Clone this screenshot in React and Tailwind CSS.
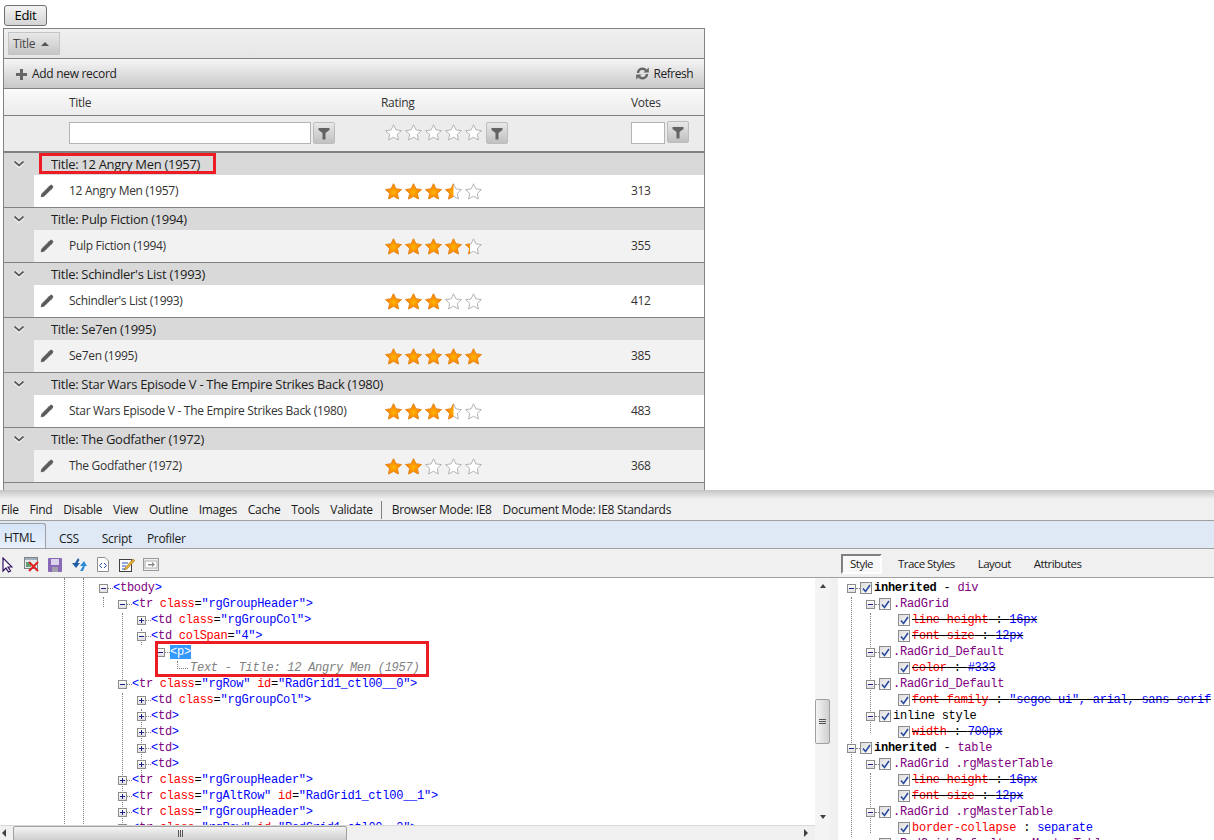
import React from "react";
import { Pencil } from "lucide-react";

const MOVIES = [
  { title: "12 Angry Men (1957)", rating: 3.5, votes: 313 },
  { title: "Pulp Fiction (1994)", rating: 4.3, votes: 355 },
  { title: "Schindler's List (1993)", rating: 3, votes: 412 },
  { title: "Se7en (1995)", rating: 5, votes: 385 },
  { title: "Star Wars Episode V - The Empire Strikes Back (1980)", rating: 3.5, votes: 483 },
  { title: "The Godfather (1972)", rating: 2, votes: 368 },
];

const MENU = ["File", "Find", "Disable", "View", "Outline", "Images", "Cache", "Tools", "Validate"];

const STAR = "M8.5 0.8 L10.9 5.9 L16.4 6.6 L12.3 10.4 L13.4 16 L8.5 13.2 L3.6 16 L4.7 10.4 L0.6 6.6 L6.1 5.9 Z";

const LEVELS = {
  0: "pl-[99px]",
  1: "pl-[118px]",
  2: "pl-[137px]",
  3: "pl-[156px]",
};

const open = (name) => [["br", "<"], ["tag", name]];
const close = [["br", ">"]];
const td = [...open("td"), ...close];
const attr = (name, value) => [["plain", " "], ["attr", name], ["plain", "="], ["val", `"${value}"`]];

const TREE = [
  { level: 0, open: true, parts: [...open("tbody"), ...close] },
  { level: 1, open: true, parts: [...open("tr"), ...attr("class", "rgGroupHeader"), ...close] },
  { level: 2, parts: [...open("td"), ...attr("class", "rgGroupCol"), ...close] },
  { level: 2, open: true, parts: [...open("td"), ...attr("colSpan", "4"), ...close] },
  { level: 3, open: true, parts: [["sel", "<p>"]] },
  { level: 3, text: "Text - Title: 12 Angry Men (1957)" },
  { level: 1, open: true, parts: [...open("tr"), ...attr("class", "rgRow"), ...attr("id", "RadGrid1_ctl00__0"), ...close] },
  { level: 2, parts: [...open("td"), ...attr("class", "rgGroupCol"), ...close] },
  { level: 2, parts: td },
  { level: 2, parts: td },
  { level: 2, parts: td },
  { level: 2, parts: td },
  { level: 1, parts: [...open("tr"), ...attr("class", "rgGroupHeader"), ...close] },
  { level: 1, parts: [...open("tr"), ...attr("class", "rgAltRow"), ...attr("id", "RadGrid1_ctl00__1"), ...close] },
  { level: 1, parts: [...open("tr"), ...attr("class", "rgGroupHeader"), ...close] },
  { level: 1, parts: [...open("tr"), ...attr("class", "rgRow"), ...attr("id", "RadGrid1_ctl00__2"), ...close] },
];

const PART_COLORS = {
  br: "text-[#0000ff]",
  tag: "text-[#800080]",
  attr: "text-[#ff0000]",
  plain: "text-black",
  val: "text-[#0000ff]",
  sel: "bg-[#3399ff] text-white",
};

const STYLES = [
  { level: 0, head: "inherited", sub: "div" },
  { level: 1, name: ".RadGrid" },
  { level: 2, prop: "line-height", value: "16px", struck: true },
  { level: 2, prop: "font-size", value: "12px", struck: true },
  { level: 1, name: ".RadGrid_Default" },
  { level: 2, prop: "color", value: "#333", struck: true },
  { level: 1, name: ".RadGrid_Default" },
  { level: 2, prop: "font-family", value: '"segoe ui", arial, sans-serif', struck: true },
  { level: 1, plain: "inline style" },
  { level: 2, prop: "width", value: "700px", struck: true },
  { level: 0, head: "inherited", sub: "table" },
  { level: 1, name: ".RadGrid .rgMasterTable" },
  { level: 2, prop: "line-height", value: "16px", struck: true },
  { level: 2, prop: "font-size", value: "12px", struck: true },
  { level: 1, name: ".RadGrid .rgMasterTable" },
  { level: 2, prop: "border-collapse", value: "separate" },
  { level: 1, name: ".RadGrid_Default .rgMasterTable" },
];

const STYLE_LEVELS = {
  0: "pl-[847px]",
  1: "pl-[866px]",
  2: "pl-[898px]",
};

function Star({ fill, id }) {
  return (
    <svg width="17" height="17" viewBox="0 0 17 17">
      <defs>
        <radialGradient id={`${id}-g`} cx="0.5" cy="0.55" r="0.5">
          <stop offset="0" stopColor="#ffb400" />
          <stop offset="1" stopColor="#ff7a00" />
        </radialGradient>
        <clipPath id={`${id}-c`}>
          <rect x="0" y="0" width={17 * fill} height="17" />
        </clipPath>
      </defs>
      <path d={STAR} fill="#ffffff" stroke="#b4b4b4" strokeWidth="1" strokeLinejoin="round" />
      {fill > 0 && (
        <path
          d={STAR}
          fill={`url(#${id}-g)`}
          stroke="#f08a10"
          strokeWidth="1"
          strokeLinejoin="round"
          clipPath={`url(#${id}-c)`}
        />
      )}
    </svg>
  );
}

function Stars({ value, name }) {
  return (
    <div className="flex gap-[3px]">
      {[0, 1, 2, 3, 4].map((i) => (
        <Star key={i} id={`${name}-${i}`} fill={Math.max(0, Math.min(1, value - i))} />
      ))}
    </div>
  );
}

function FilterButton({ className = "" }) {
  return (
    <div className={`w-[22px] h-[22px] rounded-[2px] border border-[#bcbcbc] bg-gradient-to-b from-[#e8e8e8] to-[#c0c0c0] flex items-center justify-center ${className}`}>
      <svg width="12" height="13" viewBox="0 0 12 13">
        <path d="M0.5 1 H11.5 V3 L7.5 6 V12.5 H4.5 V6 L0.5 3 Z" fill="#636363" />
      </svg>
    </div>
  );
}

function Chevron() {
  return (
    <svg width="12" height="8" viewBox="0 0 12 8">
      <path d="M1.5 1.5 L6 5.5 L10.5 1.5" fill="none" stroke="#ffffff" strokeWidth="3.6" />
      <path d="M1.5 1.5 L6 5.5 L10.5 1.5" fill="none" stroke="#5e5e5e" strokeWidth="2" />
    </svg>
  );
}

function GroupRows({ movie, index }) {
  const alt = index % 2 === 1;
  return (
    <div className="border-b border-[#828282]">
      <div className="h-[22px] bg-[#d9d9d9] flex items-center text-[13px] text-[#1c1c1c]">
        <div className="w-[30px] flex justify-center">
          <Chevron />
        </div>
        <div className="pl-[17px] pt-[2px]">Title: {movie.title}</div>
      </div>
      <div className="flex h-[32px]">
        <div className="w-[30px] bg-[#d9d9d9]" />
        <div className={`flex-1 flex items-center ${alt ? "bg-[#f2f2f2]" : "bg-white"}`}>
          <div className="w-[35px] pl-[6px]">
            <Pencil size={14} fill="#5a5a5a" strokeWidth={1.5} className="text-[#5a5a5a]" />
          </div>
          <div className="w-[312px] text-[#333333]">{movie.title}</div>
          <div className="w-[250px] pl-[4px]">
            <Stars value={movie.rating} name={`row${index}`} />
          </div>
          <div className="text-[#333333]">{movie.votes}</div>
        </div>
      </div>
    </div>
  );
}

function Grid() {
  return (
    <div className="ml-[3px] w-[702px] border-x border-t border-[#828282] bg-[#d9d9d9] text-[12px] h-[462px] overflow-hidden">
      <div className="h-[30px] border-b border-[#828282] bg-gradient-to-b from-[#f0f0f0] to-[#e6e6e6] pl-[4px] pt-[3px]">
        <div className="w-[52px] h-[23px] border border-[#c4c4c4] bg-gradient-to-b from-[#e8e8e8] to-[#c6c6c6] flex items-center pl-[4px] gap-[6px] text-[#444444]">
          Title
          <span className="w-0 h-0 border-x-[4px] border-x-transparent border-b-[4px] border-b-[#555555]" />
        </div>
      </div>
      <div className="h-[30px] border-b border-[#828282] bg-gradient-to-b from-[#f6f6f6] to-[#c8c8c8] flex items-center justify-between pl-[11px] pr-[11px] text-[#222222]">
        <div className="flex items-center gap-[4px]">
          <svg width="13" height="13" viewBox="0 0 13 13" className="mt-[2px]">
            <path d="M5 1 H8 V5 H12 V8 H8 V12 H5 V8 H1 V5 H5 Z" fill="#666666" />
          </svg>
          <span>Add new record</span>
        </div>
        <div className="flex items-center gap-[5px]">
          <svg width="13" height="13" viewBox="0 0 13 13">
            <path d="M2 6 A4.5 4.5 0 0 1 10 3.4" fill="none" stroke="#666666" strokeWidth="2.4" />
            <path d="M7.5 5.5 H12.8 V0.5 Z" fill="#666666" />
            <path d="M11 7 A4.5 4.5 0 0 1 3 9.6" fill="none" stroke="#666666" strokeWidth="2.4" />
            <path d="M5.5 7.5 H0.2 V12.5 Z" fill="#666666" />
          </svg>
          <span className="tracking-[-0.5px]">Refresh</span>
        </div>
      </div>
      <div className="h-[27px] border-b border-[#828282] bg-gradient-to-b from-[#fafafa] to-[#ececec] flex items-center pt-[2px] text-[#333333]">
        <div className="w-[65px]" />
        <div className="w-[312px]">Title</div>
        <div className="w-[250px]">Rating</div>
        <div>Votes</div>
      </div>
      <div className="h-[37px] border-b-2 border-[#828282] bg-[#ececec] flex items-center pb-[1px]">
        <div className="w-[65px]" />
        <div className="w-[316px] flex items-center gap-[2px]">
          <div className="w-[242px] h-[22px] border border-[#b4b4b4] bg-white" />
          <FilterButton />
        </div>
        <div className="w-[246px] flex items-center gap-[4px]">
          <div className="-mt-[2px]">
            <Stars value={0} name="filter" />
          </div>
          <FilterButton />
        </div>
        <div className="flex items-start gap-[2px]">
          <div className="w-[34px] h-[22px] border border-[#b4b4b4] bg-white" />
          <FilterButton className="-mt-[1px]" />
        </div>
      </div>
      {MOVIES.map((m, i) => (
        <GroupRows key={m.title} movie={m} index={i} />
      ))}
    </div>
  );
}

function Expander({ open }) {
  return (
    <span className="w-[9px] h-[9px] border border-[#8c8c8c] bg-gradient-to-b from-white to-[#e0e0e0] flex items-center justify-center relative shrink-0">
      <span className="w-[5px] h-[1px] bg-[#20208a]" />
      {!open && <span className="absolute w-[1px] h-[5px] bg-[#20208a]" />}
    </span>
  );
}

function TreeRow({ row }) {
  if (row.text) {
    return (
      <div className={`h-[16px] flex items-center ${LEVELS[row.level]}`}>
        <span className="w-[9px]" />
        <span className="w-[11px] h-[8px] ml-[12px] border-l border-b border-dotted border-[#808080] mb-[6px]" />
        <span className="italic text-[#808080] ml-[2px]">{row.text}</span>
      </div>
    );
  }
  return (
    <div className={`h-[16px] flex items-center ${LEVELS[row.level]}`}>
      <Expander open={row.open} />
      <span className="w-[5px] border-b border-dotted border-[#808080]" />
      <span className="whitespace-pre">
        {row.parts.map(([kind, str], i) => (
          <span key={i} className={PART_COLORS[kind]}>{str}</span>
        ))}
      </span>
    </div>
  );
}

function Check() {
  return (
    <span className="w-[12px] h-[12px] border border-[#8c8c8c] bg-gradient-to-br from-[#dcdcdc] to-white flex items-center justify-center shrink-0">
      <svg width="9" height="9" viewBox="0 0 9 9">
        <path d="M1 4.5 L3.5 7.5 L8 1" fill="none" stroke="#2a4a9c" strokeWidth="1.6" />
      </svg>
    </span>
  );
}

function StyleRow({ row }) {
  return (
    <div className={`h-[16px] flex items-center whitespace-pre ${STYLE_LEVELS[row.level]}`}>
      {row.level < 2 && <Expander open />}
      {row.level < 2 && <span className="w-[4px] border-b border-dotted border-[#808080]" />}
      <Check />
      <span className="ml-[2px]">
        {row.head && (
          <>
            <span className="font-bold text-black">{row.head}</span>
            <span className="text-black"> - </span>
            <span className="text-[#800080]">{row.sub}</span>
          </>
        )}
        {row.name && <span className="text-[#800080]">{row.name}</span>}
        {row.plain && <span className="text-black">{row.plain}</span>}
        {row.prop && (
          <span className={row.struck ? "line-through decoration-black" : ""}>
            <span className="text-[#ff0000]">{row.prop}</span>
            <span className="text-black"> : </span>
            <span className="text-[#0000ff]">{row.value}</span>
          </span>
        )}
      </span>
    </div>
  );
}

function ToolIcons() {
  return (
    <div className="flex items-center h-full pl-[2px] pt-[3px]">
      <svg width="11" height="16" viewBox="0 0 11 16">
        <path d="M1 1 L1 14 L4 11 L6.5 15 L8.5 14 L6 10 L10 10 Z" fill="#fff" stroke="#301060" strokeWidth="1.2" />
      </svg>
      <svg width="15" height="15" viewBox="0 0 15 15" className="ml-[11px]">
        <rect x="0.5" y="0.5" width="13" height="11" fill="#e4e8ec" stroke="#808080" />
        <rect x="1" y="1" width="12" height="2" fill="#9cb0c0" />
        <rect x="2" y="5" width="5" height="5" fill="#60a070" />
        <path d="M5 5 L14 14 M14 5 L5 14" stroke="#e02020" strokeWidth="2" />
      </svg>
      <svg width="14" height="14" viewBox="0 0 14 14" className="ml-[9px]">
        <rect x="0" y="0" width="14" height="14" rx="1" fill="#8a68b8" />
        <rect x="3" y="1" width="8" height="6" fill="#dcd4ec" />
        <rect x="4" y="9" width="6" height="5" fill="#a0a0a8" />
      </svg>
      <svg width="15" height="14" viewBox="0 0 15 14" className="ml-[10px]">
        <path d="M6 0 L3 5 H0 L4 10 L8 5 H5.5 L7.5 2 Z" fill="#1f5fa8" />
        <path d="M8 13 L11 8 H8 L12 3 L15 8 H13 L11 13 Z" fill="#2c8ad8" />
      </svg>
      <svg width="12" height="15" viewBox="0 0 12 15" className="ml-[10px]">
        <path d="M0.5 0.5 H8 L11.5 4 V14.5 H0.5 Z" fill="#fff" stroke="#909090" />
        <path d="M5 6 L2.5 8.5 L5 11 M7 6 L9.5 8.5 L7 11" fill="none" stroke="#2050b0" />
      </svg>
      <svg width="16" height="16" viewBox="0 0 16 16" className="ml-[10px]">
        <rect x="0.5" y="2.5" width="12" height="12" fill="#fff" stroke="#404040" />
        <path d="M3 6 H9 M3 9 H7 M3 12 H6" stroke="#2050b0" />
        <path d="M6 11 L14 2 L16 3.5 L8 12 L5.5 13 Z" fill="#e8b030" stroke="#806020" strokeWidth="0.5" />
      </svg>
      <svg width="16" height="14" viewBox="0 0 16 14" className="ml-[8px]">
        <rect x="0.5" y="0.5" width="15" height="12" fill="#efefef" stroke="#9a9a9a" />
        <rect x="2" y="3" width="12" height="7" fill="#fff" stroke="#b0b0b0" />
        <path d="M5 6 H9 V4 L12 6.5 L9 9 V7.5 H5 Z" fill="#8a8a8a" />
      </svg>
    </div>
  );
}

function DevTools() {
  return (
    <div className="h-[350px] bg-[#f0f0f0] text-[12px] text-[#1a1a1a]">
      <div className="h-[31px] flex items-center pt-[10px] bg-gradient-to-b from-[#c4c4c4] via-[#f0f0f0] via-[30%] to-[#f0f0f0] border-b border-[#a0a0a0] whitespace-nowrap">
        <div className="flex gap-[10.8px] pl-[1px]">
          {MENU.map((m) => (
            <span key={m}>{m}</span>
          ))}
        </div>
        <span className="w-[1px] h-[18px] bg-[#808080] ml-[8px]" />
        <span className="ml-[10px]">Browser Mode: IE8</span>
        <span className="ml-[11px]">Document Mode: IE8 Standards</span>
      </div>
      <div className="h-[28px] bg-[#dfe9f6] border-b border-[#a0a0a0] flex items-end whitespace-nowrap">
        <div className="w-[46px] h-[25px] pt-[4px] bg-gradient-to-b from-[#d5e5f8] to-[#e8f0fa] border-r border-t border-[#a0a0a0] rounded-tr-[3px] flex items-center pl-[4px]">HTML</div>
        <div className="h-[24px] flex items-center pl-[13px] pt-[5px]">
          <span>CSS</span>
          <span className="ml-[23px]">Script</span>
          <span className="ml-[15px]">Profiler</span>
        </div>
      </div>
      <div className="h-[29px] flex border-b border-[#a0a0a0]">
        <div className="w-[838px]">
          <ToolIcons />
        </div>
        <div className="flex-1 flex items-center pt-[1px] text-[11.5px] tracking-[-0.55px]">
          <span className="ml-[3px] w-[41px] h-[20px] border-2 border-t-[#808080] border-l-[#808080] border-r-white border-b-white bg-[#f8f8f8] flex items-center justify-center">Style</span>
          <span className="ml-[16px]">Trace Styles</span>
          <span className="ml-[23px]">Layout</span>
          <span className="ml-[23px]">Attributes</span>
        </div>
      </div>
      <div className="h-[262px] relative bg-white overflow-hidden font-['Liberation_Mono',monospace] text-[12px] tracking-[-0.25px]">
        <div className="absolute left-[64px] top-0 h-full border-l border-dotted border-[#808080]" />
        <div className="absolute left-[83px] top-0 h-full border-l border-dotted border-[#808080]" />
        <div className="absolute left-[103px] top-[19px] h-[10px] border-l border-dotted border-[#808080]" />
        <div className="absolute left-[122px] top-[35px] h-[72px] border-l border-dotted border-[#808080]" />
        <div className="absolute left-[122px] top-[115px] h-[130px] border-l border-dotted border-[#808080]" />
        <div className="absolute left-[141px] top-[51px] h-[16px] border-l border-dotted border-[#808080]" />
        <div className="absolute left-[141px] top-[131px] h-[64px] border-l border-dotted border-[#808080]" />
        <div className="absolute left-[851px] top-[19px] h-[240px] border-l border-dotted border-[#808080]" />
        <div className="absolute left-[870px] top-[35px] h-[120px] border-l border-dotted border-[#808080]" />
        <div className="absolute left-[870px] top-[195px] h-[60px] border-l border-dotted border-[#808080]" />
        <div className="pt-[2px]">
          {TREE.map((row, i) => (
            <TreeRow key={i} row={row} />
          ))}
        </div>
        <div className="absolute left-[155px] top-[63px] w-[274px] h-[36px] border-[3px] border-[#ed1c24]" />
        <div className="absolute left-[838px] top-0 w-[376px] h-full pt-[2px]">
          <div className="-ml-[838px]">
            {STYLES.map((row, i) => (
              <StyleRow key={i} row={row} />
            ))}
          </div>
        </div>
        <div className="absolute left-[815px] top-0 w-[23px] h-full bg-[#f0f0f0]">
          <div className="w-[15px] h-full bg-[#f4f4f4] flex flex-col items-center justify-between pt-[6px] pb-[21px] relative">
            <span className="w-0 h-0 border-x-[3px] border-x-transparent border-b-[4px] border-b-[#404040]" />
            <span className="w-0 h-0 border-x-[3px] border-x-transparent border-t-[4px] border-t-[#404040]" />
            <div className="absolute top-[121px] left-0 w-[15px] h-[45px] border border-[#a0a0a0] rounded-[2px] bg-gradient-to-r from-[#f4f4f4] to-[#cfcfcf] flex flex-col items-center justify-center gap-[1px]">
              <span className="w-[7px] h-[1px] bg-[#555555]" />
              <span className="w-[7px] h-[1px] bg-[#555555]" />
              <span className="w-[7px] h-[1px] bg-[#555555]" />
            </div>
          </div>
        </div>
        <div className="absolute left-0 bottom-0 h-[15px] w-[815px] bg-[#f0f0f0] border-t border-[#d8d8d8] flex items-center">
          <span className="ml-[2px] w-0 h-0 border-y-[4px] border-y-transparent border-r-[4px] border-r-[#404040]" />
          <div className="ml-[7px] w-[334px] h-[15px] border border-[#a0a0a0] rounded-[2px] bg-gradient-to-b from-[#f4f4f4] to-[#cfcfcf] flex items-center justify-center">
            <span className="w-[1px] h-[7px] bg-[#555555]" />
            <span className="w-[1px] h-[7px] bg-[#555555] ml-[1px]" />
            <span className="w-[1px] h-[7px] bg-[#555555] ml-[1px]" />
          </div>
          <span className="ml-[457px] w-0 h-0 border-y-[4px] border-y-transparent border-l-[4px] border-l-[#404040]" />
        </div>
      </div>
    </div>
  );
}

export default function App() {
  return (
    <div className="w-[1214px] h-[840px] overflow-hidden bg-white font-['Open_Sans',sans-serif] tracking-[-0.3px] relative">
      <div className="h-[28px] pl-[4px] pt-[5px]">
        <button className="block w-[43px] h-[21px] border border-[#707070] rounded-[3px] bg-gradient-to-b from-[#f4f4f4] to-[#d4d4d4] text-[13px] text-black">
          Edit
        </button>
      </div>
      <Grid />
      <DevTools />
      <div className="absolute left-[39px] top-[153px] w-[177px] h-[21px] border-[3px] border-[#ed1c24]" />
    </div>
  );
}
